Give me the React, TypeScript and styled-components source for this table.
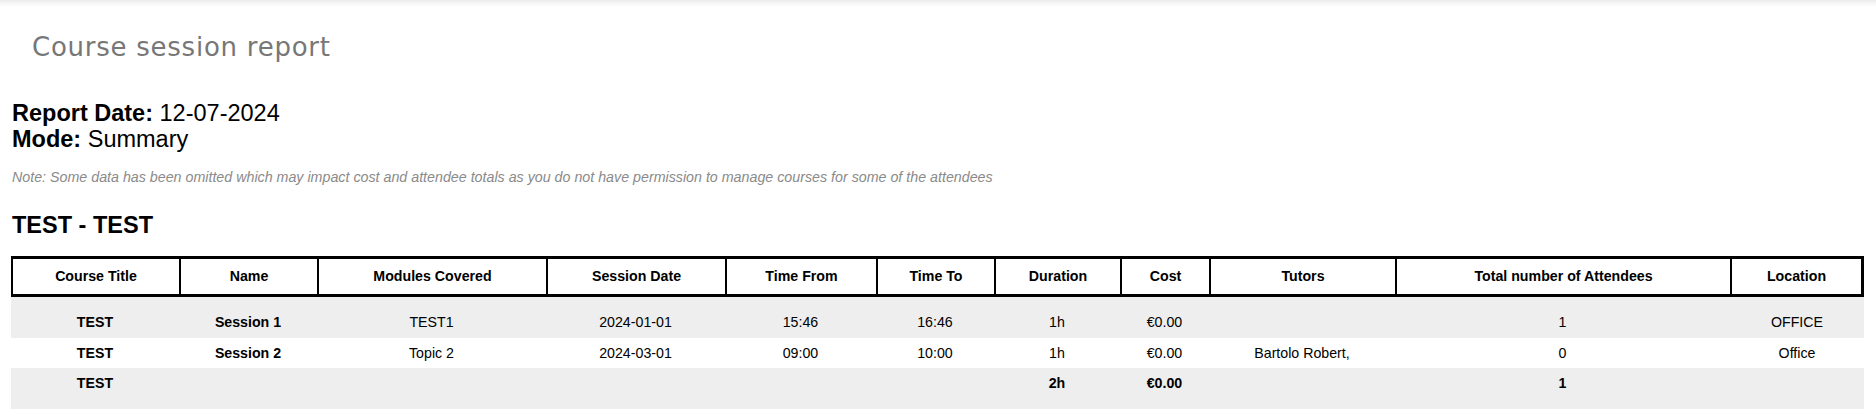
import React from "react";
import styled, { createGlobalStyle } from "styled-components";

const GlobalStyle = createGlobalStyle`
  html, body {
    margin: 0;
    padding: 0;
    background: #ffffff;
  }
  body {
    font-family: "Liberation Sans", Arial, sans-serif;
    color: #000;
  }
`;

const Page = styled.div`
  display: flex;
  flex-direction: column;
`;

const TopShadow = styled.div`
  height: 7px;
  background: linear-gradient(to bottom, #ececec 0%, #f7f7f7 50%, #ffffff 100%);
`;

const PageTitle = styled.h1`
  margin: 27px 0 0 0;
  padding-left: 32px;
  font-family: "DejaVu Sans", Verdana, sans-serif;
  font-weight: normal;
  font-size: 26px;
  line-height: 26px;
  letter-spacing: 0.75px;
  color: #777777;
`;

const Content = styled.div`
  display: flex;
  flex-direction: column;
  padding: 0 12px 0 11px;
`;

const ReportInfo = styled.div`
  margin-top: 40px;
  padding-left: 1px;
  font-size: 23.5px;
  line-height: 26px;
  display: flex;
  flex-direction: column;
`;

const Label = styled.b`
  font-weight: bold;
`;

const Note = styled.p`
  margin: 17px 0 0 0;
  padding-left: 1px;
  font-size: 14.25px;
  line-height: 16px;
  font-style: italic;
  color: #8a8a8a;
`;

const GroupTitle = styled.h2`
  margin: 27px 0 0 0;
  padding-left: 1px;
  font-size: 23.5px;
  line-height: 26px;
  font-weight: bold;
`;

const Table = styled.table`
  margin-top: 18px;
  width: 100%;
  table-layout: fixed;
  border-collapse: separate;
  border-spacing: 0;
  font-size: 14.2px;
  line-height: 16px;
`;

const HeaderCell = styled.th<{ $w: number; $last?: boolean }>`
  box-sizing: border-box;
  width: ${(p) => p.$w}px;
  padding: 9px 4px 10px;
  border-top: 3px solid #000;
  border-bottom: 3px solid #000;
  border-left: 2px solid #000;
  border-right: ${(p) => (p.$last ? "3px solid #000" : "0")};
  font-weight: bold;
  text-align: center;
  vertical-align: middle;
`;

const Row = styled.tr<{ $shade?: boolean; $first?: boolean; $last?: boolean }>`
  background: ${(p) => (p.$shade ? "#eeeeee" : "#ffffff")};
  & > td {
    padding-top: ${(p) => (p.$first ? "17px" : "7px")};
    padding-bottom: ${(p) => (p.$last ? "18px" : p.$first ? "8px" : "7px")};
  }
`;

const Cell = styled.td<{ $bold?: boolean }>`
  padding-left: 4px;
  padding-right: 4px;
  text-align: center;
  vertical-align: top;
  font-weight: ${(p) => (p.$bold ? "bold" : "normal")};
`;

const columns: { title: string; w: number }[] = [
  { title: "Course Title", w: 168 },
  { title: "Name", w: 138 },
  { title: "Modules Covered", w: 229 },
  { title: "Session Date", w: 179 },
  { title: "Time From", w: 151 },
  { title: "Time To", w: 118 },
  { title: "Duration", w: 126 },
  { title: "Cost", w: 89 },
  { title: "Tutors", w: 186 },
  { title: "Total number of Attendees", w: 335 },
  { title: "Location", w: 134 },
];

type CellData = { text: string; bold?: boolean };

const rows: CellData[][] = [
  [
    { text: "TEST", bold: true },
    { text: "Session 1", bold: true },
    { text: "TEST1" },
    { text: "2024-01-01" },
    { text: "15:46" },
    { text: "16:46" },
    { text: "1h" },
    { text: "€0.00" },
    { text: "" },
    { text: "1" },
    { text: "OFFICE" },
  ],
  [
    { text: "TEST", bold: true },
    { text: "Session 2", bold: true },
    { text: "Topic 2" },
    { text: "2024-03-01" },
    { text: "09:00" },
    { text: "10:00" },
    { text: "1h" },
    { text: "€0.00" },
    { text: "Bartolo Robert," },
    { text: "0" },
    { text: "Office" },
  ],
  [
    { text: "TEST", bold: true },
    { text: "" },
    { text: "" },
    { text: "" },
    { text: "" },
    { text: "" },
    { text: "2h", bold: true },
    { text: "€0.00", bold: true },
    { text: "" },
    { text: "1", bold: true },
    { text: "" },
  ],
];

export default function App() {
  return (
    <>
      <GlobalStyle />
      <Page>
        <TopShadow />
        <PageTitle>Course session report</PageTitle>
        <Content>
          <ReportInfo>
            <span>
              <Label>Report Date:</Label> 12-07-2024
            </span>
            <span>
              <Label>Mode:</Label> Summary
            </span>
          </ReportInfo>
          <Note>
            Note: Some data has been omitted which may impact cost and attendee totals as you do not have
            permission to manage courses for some of the attendees
          </Note>
          <GroupTitle>TEST - TEST</GroupTitle>
          <Table>
            <thead>
              <tr>
                {columns.map((c, i) => (
                  <HeaderCell key={c.title} $w={c.w} $last={i === columns.length - 1}>
                    {c.title}
                  </HeaderCell>
                ))}
              </tr>
            </thead>
            <tbody>
              {rows.map((r, ri) => (
                <Row key={ri} $shade={ri % 2 === 0} $first={ri === 0} $last={ri === rows.length - 1}>
                  {r.map((c, ci) => (
                    <Cell key={ci} $bold={c.bold}>
                      {c.text}
                    </Cell>
                  ))}
                </Row>
              ))}
            </tbody>
          </Table>
        </Content>
      </Page>
    </>
  );
}
